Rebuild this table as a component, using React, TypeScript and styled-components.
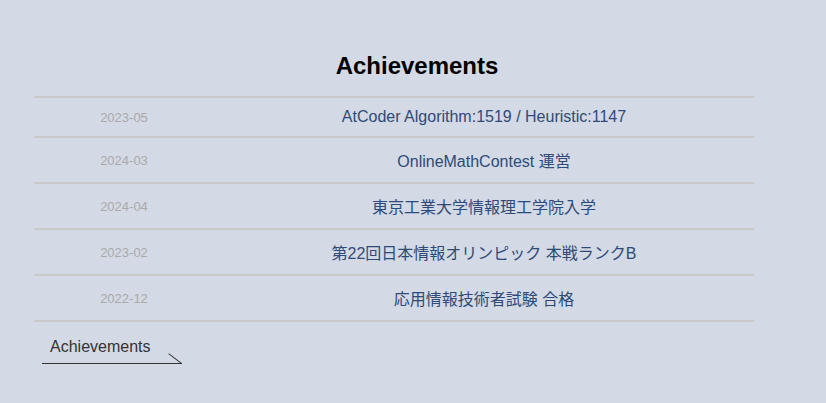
import React from 'react';
import styled, { createGlobalStyle } from 'styled-components';

const ACHIEVEMENTS = [
  { date: '2023-05', title: 'AtCoder Algorithm:1519 / Heuristic:1147' },
  { date: '2024-03', title: 'OnlineMathContest 運営' },
  { date: '2024-04', title: '東京工業大学情報理工学院入学' },
  { date: '2023-02', title: '第22回日本情報オリンピック 本戦ランクB' },
  { date: '2022-12', title: '応用情報技術者試験 合格' },
];

const App = () => {
  return (
    <>
      <GlobalStyle />
      <Section>
        <Title>Achievements</Title>
        <Table>
          {ACHIEVEMENTS.map((item) => (
            <Row key={item.date + item.title}>
              <DateCell>{item.date}</DateCell>
              <TextCell>{item.title}</TextCell>
            </Row>
          ))}
        </Table>
        <Footer>
          <SlashHeading>Achievements</SlashHeading>
        </Footer>
      </Section>
    </>
  );
};

export default App;

const GlobalStyle = createGlobalStyle`
  html, body {
    margin: 0;
    padding: 0;
    background: #d3d9e5;
  }
  body {
    font-family: "Liberation Sans", Arial, "Noto Sans CJK JP", sans-serif;
    height: 403px;
    overflow: hidden;
  }
`;

const Section = styled.section`
  width: 720px;
  margin-left: 34px;
  padding-top: 52px;
`;

const Title = styled.h2`
  margin: 0 0 16px;
  padding-left: 46px;
  text-align: center;
  font-size: 24px;
  font-weight: 700;
  color: #000;
`;

const Table = styled.div`
  display: flex;
  flex-direction: column;
  border-top: 2px solid #c9c9c9;
`;

const Row = styled.div`
  display: grid;
  grid-template-columns: 180px 1fr;
  align-items: center;
  padding: 10px 0;
  border-bottom: 2px solid #c9c9c9;
`;

const DateCell = styled.div`
  text-align: center;
  font-size: 13px;
  color: #aaaaaa;
`;

const TextCell = styled.div`
  text-align: center;
  font-size: 16px;
  color: #2f4a78;
`;

const Footer = styled.div`
  display: flex;
  padding: 16px 0 0 8px;
`;

const SlashHeading = styled.h3`
  position: relative;
  margin: 0;
  padding: 0 31px 7px 8px;
  font-size: 16px;
  font-weight: 400;
  color: #333;
  border-bottom: 1px solid #333;

  &::after {
    content: '';
    position: absolute;
    right: -1px;
    bottom: 4px;
    width: 16px;
    height: 1px;
    background: #333;
    transform: rotate(37deg);
    transform-origin: center;
  }
`;
